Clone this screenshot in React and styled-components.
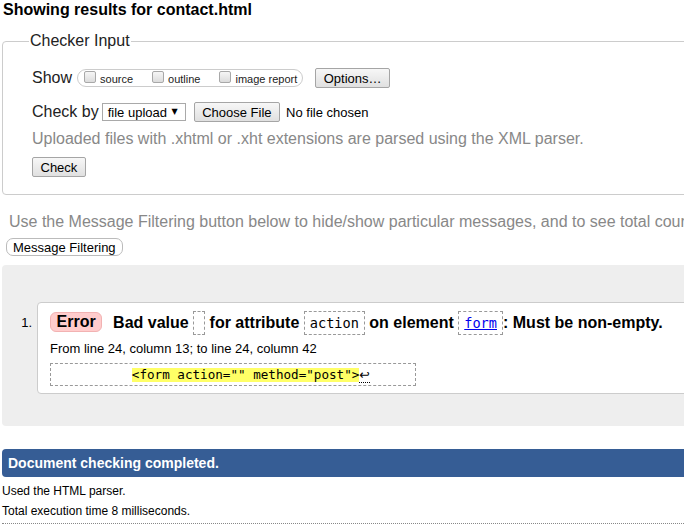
import React from "react";
import styled, { createGlobalStyle } from "styled-components";

const Global = createGlobalStyle`
  html, body { margin: 0; padding: 0; background: #fff; overflow: hidden; }
  body { font-family: "Liberation Sans", Arial, sans-serif; color: #000; }
`;

const Page = styled.div`
  width: 1000px;
  padding-left: 2px;
`;

const Title = styled.h2`
  margin: 0;
  padding-left: 1px;
  font-size: 16px;
  line-height: 20px;
  font-weight: bold;
`;

const Fieldset = styled.fieldset`
  margin: 11px 0 0 0;
  padding: 0;
  min-width: 0;
  border: 1px solid #ccc;
  border-radius: 4px;
`;

const Legend = styled.legend`
  margin-left: 26px;
  padding: 0 1px;
  font-size: 16px;
  line-height: 20px;
  color: #222;
`;

const FieldBody = styled.div`
  display: flex;
  flex-direction: column;
  align-items: flex-start;
  padding: 0 0 17px 29px;
`;

const Row = styled.div`
  display: flex;
  align-items: center;
  height: 22px;
  margin-top: ${(p) => p.$mt}px;
`;

const RowLabel = styled.span`
  font-size: 16px;
  line-height: 20px;
  color: #222;
`;

const ShowGroup = styled.div`
  display: flex;
  align-items: flex-end;
  box-sizing: border-box;
  height: 18px;
  margin-left: 5px;
  padding: 0 5px 0 6px;
  border: 1px solid #ccc;
  border-radius: 9px;
`;

const ShowItem = styled.label`
  display: flex;
  align-items: flex-end;
  margin-left: ${(p) => (p.$first ? 0 : 19)}px;
`;

const Box = styled.span`
  display: block;
  box-sizing: border-box;
  width: 12px;
  height: 12px;
  margin: 0 4px 3px 0;
  border: 1px solid #a8a8a8;
  border-radius: 2px;
  background: linear-gradient(#f6f6f6, #dcdcdc);
`;

const ShowText = styled.span`
  font-size: 11px;
  line-height: 13px;
  color: #222;
`;

const Button = styled.button`
  box-sizing: border-box;
  height: 20px;
  margin: 0 0 0 ${(p) => p.$ml || 0}px;
  padding: 0 7.5px;
  font-family: inherit;
  font-size: 13px;
  line-height: 1;
  color: #000;
  border: 1px solid #a5a5a5;
  border-radius: 2px;
  background: linear-gradient(#f7f7f7, #e0e0e0);
`;

const Select = styled.span`
  display: flex;
  align-items: center;
  justify-content: space-between;
  box-sizing: border-box;
  width: 84px;
  height: 18px;
  margin-left: 3px;
  padding: 0 7px 0 5px;
  border: 1px solid #a9a9a9;
  font-size: 13px;
  background: #fff;
`;

const Caret = styled.span`
  font-size: 8px;
  line-height: 1;
  font-family: "DejaVu Sans", sans-serif;
`;

const FileName = styled.span`
  margin-left: 6px;
  font-size: 13px;
`;

const Note = styled.p`
  margin: 6px 0 0;
  font-size: 16px;
  line-height: 20px;
  color: #888;
`;

const CheckButton = styled(Button)`
  margin-top: 8px;
`;

const Hint = styled.p`
  margin: 17px 0 0;
  padding-left: 7px;
  font-size: 16px;
  line-height: 20px;
  color: #888;
  white-space: nowrap;
`;

const FilterButton = styled.button`
  display: block;
  box-sizing: border-box;
  height: 18px;
  margin: 6px 0 0 4px;
  padding: 0 6px;
  font-family: inherit;
  font-size: 13px;
  line-height: 1;
  color: #000;
  background: #fff;
  border: 1px solid #bbb;
  border-radius: 7px;
`;

const Results = styled.ol`
  list-style: none;
  margin: 9px 0 0;
  padding: 37px 0 32px;
  background: #eee;
  border-radius: 4px;
`;

const Message = styled.li`
  display: flex;
  align-items: flex-start;
`;

const Num = styled.span`
  box-sizing: border-box;
  width: 35px;
  padding: 11px 5px 0 0;
  text-align: right;
  font-size: 13px;
  line-height: 20px;
`;

const Card = styled.div`
  flex: 1;
  padding: 8px 12px 7px;
  background: #fff;
  border: 1px solid #ccc;
  border-radius: 4px;
`;

const Heading = styled.p`
  margin: 0;
  font-size: 16px;
  line-height: 24px;
  font-weight: bold;
  white-space: nowrap;
`;

const Badge = styled.strong`
  display: inline-block;
  vertical-align: top;
  box-sizing: border-box;
  height: 20px;
  margin: 1px 6.5px 0 0;
  padding: 0 5.5px;
  line-height: 18px;
  background: #fcc;
  border: 1px solid #f2b2b2;
  border-radius: 6px;
`;

const Code = styled.code`
  display: inline-block;
  vertical-align: top;
  box-sizing: border-box;
  height: 24px;
  min-width: 10px;
  padding: 0 5px;
  border: 1px dashed #999;
  font-family: "DejaVu Sans Mono", monospace;
  font-size: 13.6px;
  font-weight: normal;
  line-height: 22px;
`;

const CodeLink = styled.a`
  color: #00e;
  text-decoration: underline;
`;

const Location = styled.p`
  margin: 6px 0 0;
  font-size: 13px;
  line-height: 16px;
`;

const Extract = styled.pre`
  width: fit-content;
  margin: 6px 0 0;
  padding: 0 45px 0 5px;
  border: 1px dashed #999;
  font-family: "DejaVu Sans Mono", monospace;
  font-size: 12.6px;
  line-height: 21px;
`;

const Mark = styled.mark`
  display: inline-block;
  background: #ff6;
  color: #000;
  line-height: 14px;
`;

const LineEnd = styled.span`
  font-family: "DejaVu Sans", sans-serif;
  border-bottom: 1px dotted #000;
`;

const Done = styled.h2`
  margin: 23px 0 0;
  padding-left: 6px;
  height: 28px;
  font-size: 14px;
  line-height: 28px;
  font-weight: bold;
  color: #fff;
  background: #365d95;
  border-radius: 4px;
`;

const Meta = styled.p`
  margin: ${(p) => (p.$first ? 4 : 0)}px 0 0;
  font-size: 12px;
  line-height: 20px;
`;

const Divider = styled.hr`
  margin: 2px 0 0;
  border: 0;
  border-top: 1px dotted #888;
`;

const options = ["source", "outline", "image report"];

export default function App() {
  return (
    <Page>
      <Global />
      <Title>Showing results for contact.html</Title>
      <Fieldset>
        <Legend>Checker Input</Legend>
        <FieldBody>
          <Row $mt={16}>
            <RowLabel>Show</RowLabel>
            <ShowGroup>
              {options.map((o, i) => (
                <ShowItem key={o} $first={i === 0}>
                  <Box />
                  <ShowText>{o}</ShowText>
                </ShowItem>
              ))}
            </ShowGroup>
            <Button $ml={12}>Options…</Button>
          </Row>
          <Row $mt={12}>
            <RowLabel>Check by</RowLabel>
            <Select>
              file upload <Caret>▼</Caret>
            </Select>
            <Button $ml={8}>Choose File</Button>
            <FileName>No file chosen</FileName>
          </Row>
          <Note>Uploaded files with .xhtml or .xht extensions are parsed using the XML parser.</Note>
          <CheckButton>Check</CheckButton>
        </FieldBody>
      </Fieldset>
      <Hint>
        Use the Message Filtering button below to hide/show particular messages, and to see total counts of errors and warnings.
      </Hint>
      <FilterButton>Message Filtering</FilterButton>
      <Results>
        <Message>
          <Num>1.</Num>
          <Card>
            <Heading>
              <Badge>Error</Badge> Bad value <Code></Code> for attribute <Code>action</Code> on element{" "}
              <Code>
                <CodeLink href="#">form</CodeLink>
              </Code>
              : Must be non-empty.
            </Heading>
            <Location>From line 24, column 13; to line 24, column 42</Location>
            <Extract>
              {"          "}
              <Mark>{'<form action="" method="post">'}</Mark>
              <LineEnd>↩</LineEnd>
            </Extract>
          </Card>
        </Message>
      </Results>
      <Done>Document checking completed.</Done>
      <Meta $first>Used the HTML parser.</Meta>
      <Meta>Total execution time 8 milliseconds.</Meta>
      <Divider />
    </Page>
  );
}
